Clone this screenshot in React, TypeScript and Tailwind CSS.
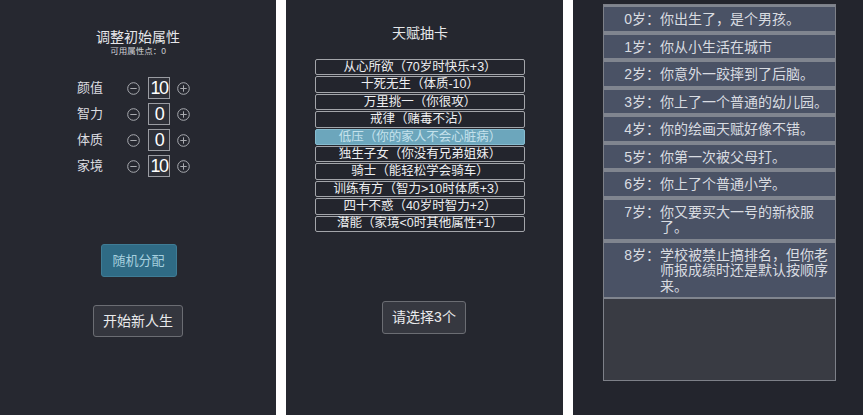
import React from "react";

const FONT = {
  fontFamily: '"Liberation Sans", "Noto Sans CJK SC", sans-serif',
};

type Attr = { label: string; value: number };

const ATTRS: Attr[] = [
  { label: "颜值", value: 10 },
  { label: "智力", value: 0 },
  { label: "体质", value: 0 },
  { label: "家境", value: 10 },
];

const TALENTS = [
  "从心所欲（70岁时快乐+3）",
  "十死无生（体质-10）",
  "万里挑一（你很攻）",
  "戒律（赌毒不沾）",
  "低压（你的家人不会心脏病）",
  "独生子女（你没有兄弟姐妹）",
  "骑士（能轻松学会骑车）",
  "训练有方（智力>10时体质+3）",
  "四十不惑（40岁时智力+2）",
  "潜能（家境<0时其他属性+1）",
];

const EVENTS = [
  { age: 0, text: "你出生了，是个男孩。" },
  { age: 1, text: "你从小生活在城市" },
  { age: 2, text: "你意外一跤摔到了后脑。" },
  { age: 3, text: "你上了一个普通的幼儿园。" },
  { age: 4, text: "你的绘画天赋好像不错。" },
  { age: 5, text: "你第一次被父母打。" },
  { age: 6, text: "你上了个普通小学。" },
  { age: 7, text: "你又要买大一号的新校服了。" },
  { age: 8, text: "学校被禁止搞排名，但你老师报成绩时还是默认按顺序来。" },
];

const CircleSign = ({ plus }: { plus?: boolean }) => (
  <svg width="13" height="13" viewBox="0 0 13 13" className="shrink-0">
    <circle cx="6.5" cy="6.5" r="5.8" fill="none" stroke="#a9abb0" strokeWidth="1" />
    <line x1="3.3" y1="6.5" x2="9.7" y2="6.5" stroke="#a9abb0" strokeWidth="1" />
    {plus && <line x1="6.5" y1="3.3" x2="6.5" y2="9.7" stroke="#a9abb0" strokeWidth="1" />}
  </svg>
);

const AttributePanel = () => {
  return (
    <div className="flex w-[276px] shrink-0 flex-col bg-[#262830] text-white">
      <div className="mt-[28px] text-center text-[14px] leading-[18px] text-[#e6e7ea]">
        调整初始属性
      </div>
      <div className="text-center text-[8.5px] leading-[10px] text-[#d0d2d6]">
        可用属性点：0
      </div>
      <div className="ml-[77px] mt-[21px] flex flex-col gap-[4px]">
        {ATTRS.map((a) => (
          <div key={a.label} className="flex h-[22px] items-center">
            <span className="w-[50px] text-[13px] text-[#dcdde0]">{a.label}</span>
            <CircleSign />
            <div className="ml-[8px] flex h-[22px] w-[22px] items-center justify-center border border-[#9a9ca2] bg-[#2e3038] text-[18px] leading-none tracking-[-1.5px] text-white">
              {a.value}
            </div>
            <span className="ml-[7px]">
              <CircleSign plus />
            </span>
          </div>
        ))}
      </div>
      <div className="mt-[67px] flex justify-center">
        <button className="ml-[1px] h-[33px] w-[76px] rounded-[3px] border border-[#3f7c95] bg-[#2f6b85] text-[13px] text-[#a6d0df]">
          随机分配
        </button>
      </div>
      <div className="mt-[28px] flex justify-center">
        <button className="h-[32px] w-[90px] rounded-[3px] border border-[#6b6d73] bg-[#34363e] text-[14px] text-[#e9eaec]">
          开始新人生
        </button>
      </div>
    </div>
  );
};

const TalentPanel = () => {
  const selected = 4;
  return (
    <div className="ml-[10px] flex w-[277px] shrink-0 flex-col bg-[#25272f]">
      <div className="ml-[29px] mt-[24px] w-[210px] text-center text-[14px] leading-[18px] text-[#e6e7ea]">
        天赋抽卡
      </div>
      <div className="ml-[29px] mt-[17px] flex w-[210px] flex-col gap-[1px]">
        {TALENTS.map((t, i) => (
          <div
            key={t}
            className={
              i === selected
                ? "flex h-[16.4px] items-center justify-center rounded-[2px] border border-[#86bcd0] bg-[#6ca6bc] text-[12.5px] leading-none text-[#c5e2ec]"
                : "flex h-[16.4px] items-center justify-center rounded-[2px] border border-[#a3a5aa] bg-[#23252d] text-[12.5px] leading-none text-[#eeeff1]"
            }
          >
            {t}
          </div>
        ))}
      </div>
      <div className="ml-[33px] flex w-[210px] justify-center">
        <button className="mt-[69px] h-[33px] w-[84px] rounded-[3px] border border-[#6b6d73] bg-[#363840] text-[14px] text-[#e9eaec]">
          请选择3个
        </button>
      </div>
    </div>
  );
};

const LifePanel = () => {
  return (
    <div className="ml-[10px] flex flex-1 flex-col bg-[#23252d] pb-[34px] pl-[30px] pr-[27px] pt-[4px]">
      <div className="flex flex-1 flex-col border border-[#7d8088] bg-[#393b43]">
        {EVENTS.map((e) => (
          <div
            key={e.age}
            className="flex min-h-[24px] items-start border-y-2 border-[#80858f] bg-[#4a5265] pb-[3px] pt-[5px] text-[14px] leading-[15.5px] text-[#d9dce1]"
          >
            <span className="w-[56px] shrink-0 text-right">{e.age}岁：</span>
            <span className="w-[170px]">{e.text}</span>
          </div>
        ))}
      </div>
    </div>
  );
};

export default function App() {
  return (
    <div className="flex h-[415px] w-[863px] bg-white" style={FONT}>
      <AttributePanel />
      <TalentPanel />
      <LifePanel />
    </div>
  );
}
